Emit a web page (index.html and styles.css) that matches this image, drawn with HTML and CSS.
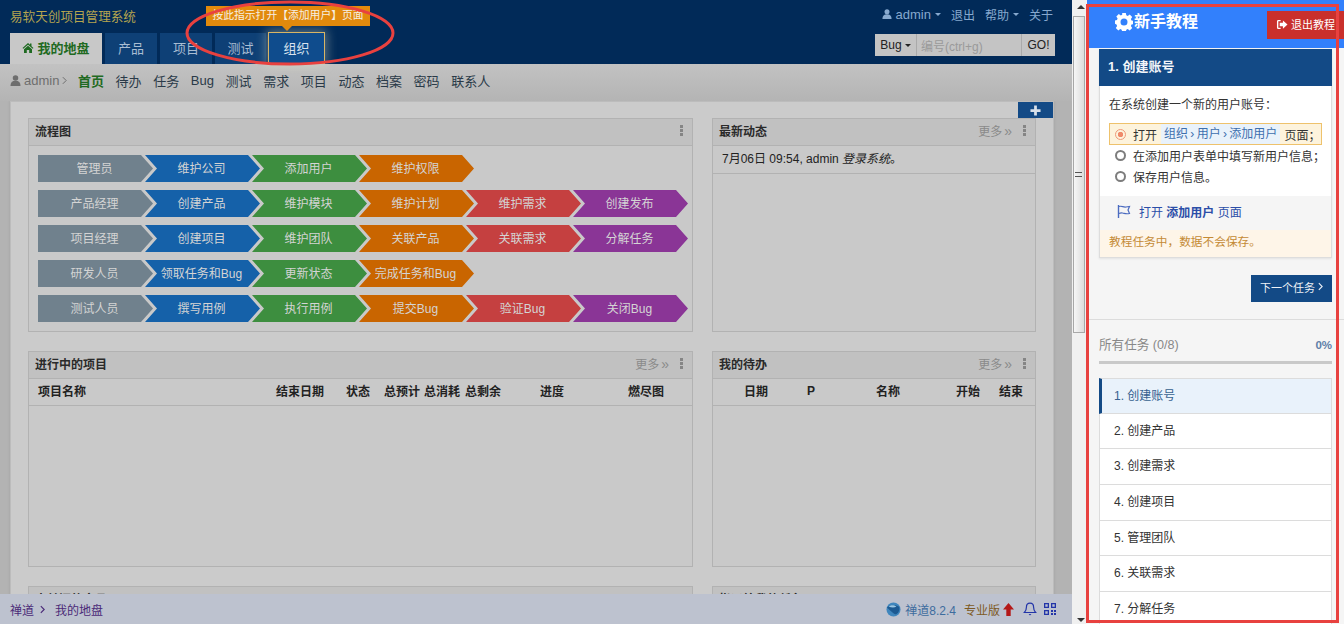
FILE: index.html
```html
<!DOCTYPE html>
<html lang="zh-CN">
<head>
<meta charset="utf-8">
<title>我的地盘 - 禅道</title>
<link rel="stylesheet" href="styles.css">
</head>
<body>
<div class="app">
  <div class="page">
    <header class="topbar">
      <div class="topbar-row">
        <span class="brand">易软天创项目管理系统</span>
        <nav class="usernav">
          <a class="usernav-item usernav-user"><svg class="ico-user" viewBox="0 0 12 12"><circle cx="6" cy="3.2" r="3"/><path d="M0.5 12c0-3.6 1.8-5.6 5.5-5.6s5.5 2 5.5 5.6z"/></svg>admin<i class="caret"></i></a>
          <a class="usernav-item">退出</a>
          <a class="usernav-item">帮助<i class="caret"></i></a>
          <a class="usernav-item">关于</a>
        </nav>
      </div>
      <div class="topbar-row topbar-lower">
        <nav class="tabs">
          <a class="tab tab-home"><svg class="ico-home" viewBox="0 0 12 12"><path d="M6 1 0.5 6l.8.8L6 2.7l4.700 4.100.8-.8L9.500 4.200V1.500H8v1.300z"/><path d="M2 7.300 6 3.800l4 3.500V11H7.200V8H4.800v3H2z"/></svg>我的地盘</a>
          <a class="tab">产品</a>
          <a class="tab">项目</a>
          <a class="tab">测试</a>
          <a class="tab tab-target">组织</a>
        </nav>
        <form class="search">
          <span class="search-type">Bug<i class="caret caret-dark"></i></span>
          <span class="search-input">编号(ctrl+g)</span>
          <span class="search-go">GO!</span>
        </form>
      </div>
      <div class="hint">按此指示打开【添加用户】页面</div>
    </header>

    <nav class="subnav">
      <span class="subnav-user"><svg class="ico-user ico-user-gray" viewBox="0 0 12 12"><circle cx="6" cy="3.2" r="3"/><path d="M0.5 12c0-3.6 1.8-5.6 5.5-5.6s5.5 2 5.5 5.6z"/></svg>admin<svg class="ico-chev" viewBox="0 0 6 10"><path d="M1 1l4 4-4 4" fill="none" stroke="currentColor" stroke-width="1.2"/></svg></span>
      <a class="subnav-item subnav-active">首页</a>
      <a class="subnav-item">待办</a>
      <a class="subnav-item">任务</a>
      <a class="subnav-item">Bug</a>
      <a class="subnav-item">测试</a>
      <a class="subnav-item">需求</a>
      <a class="subnav-item">项目</a>
      <a class="subnav-item">动态</a>
      <a class="subnav-item">档案</a>
      <a class="subnav-item">密码</a>
      <a class="subnav-item">联系人</a>
    </nav>

    <main class="main">
      <div class="dashboard">
        <div class="add-block"><svg viewBox="0 0 12 12"><path d="M4.500 0.500h3v4h4v3h-4v4h-3v-4h-4v-3h4z"/></svg></div>
        <div class="dash-grid">
          <section class="block block-flow">
            <div class="block-head"><span class="block-title">流程图</span><span class="kebab"><i></i><i></i><i></i></span></div>
            <div class="flow">
              <div class="flow-row"><span class="chev c-role">管理员</span><span class="chev c-blue">维护公司</span><span class="chev c-green">添加用户</span><span class="chev c-orange">维护权限</span></div>
              <div class="flow-row"><span class="chev c-role">产品经理</span><span class="chev c-blue">创建产品</span><span class="chev c-green">维护模块</span><span class="chev c-orange">维护计划</span><span class="chev c-red">维护需求</span><span class="chev c-purple">创建发布</span></div>
              <div class="flow-row"><span class="chev c-role">项目经理</span><span class="chev c-blue">创建项目</span><span class="chev c-green">维护团队</span><span class="chev c-orange">关联产品</span><span class="chev c-red">关联需求</span><span class="chev c-purple">分解任务</span></div>
              <div class="flow-row"><span class="chev c-role">研发人员</span><span class="chev c-blue">领取任务和Bug</span><span class="chev c-green">更新状态</span><span class="chev c-orange">完成任务和Bug</span></div>
              <div class="flow-row"><span class="chev c-role">测试人员</span><span class="chev c-blue">撰写用例</span><span class="chev c-green">执行用例</span><span class="chev c-orange">提交Bug</span><span class="chev c-red">验证Bug</span><span class="chev c-purple">关闭Bug</span></div>
            </div>
          </section>
          <section class="block block-flow">
            <div class="block-head"><span class="block-title">最新动态</span><span class="more">更多<b>»</b></span><span class="kebab"><i></i><i></i><i></i></span></div>
            <div class="feed-item">7月06日 09:54, admin <em>登录系统</em>。</div>
          </section>
          <section class="block block-list">
            <div class="block-head"><span class="block-title">进行中的项目</span><span class="more">更多<b>»</b></span><span class="kebab"><i></i><i></i><i></i></span></div>
            <div class="thead thead-projects"><span>项目名称</span><span>结束日期</span><span>状态</span><span>总预计</span><span>总消耗</span><span>总剩余</span><span>进度</span><span>燃尽图</span></div>
          </section>
          <section class="block block-list">
            <div class="block-head"><span class="block-title">我的待办</span><span class="more">更多<b>»</b></span><span class="kebab"><i></i><i></i><i></i></span></div>
            <div class="thead thead-todos"><span>日期</span><span>P</span><span>名称</span><span>开始</span><span>结束</span></div>
          </section>
          <section class="block block-list">
            <div class="block-head"><span class="block-title">未关闭的产品</span></div>
          </section>
          <section class="block block-list">
            <div class="block-head"><span class="block-title">指派给我的任务</span></div>
          </section>
        </div>
      </div>
    </main>

    <footer class="footer">
      <div class="crumbs"><a>禅道</a><svg class="ico-chev" viewBox="0 0 6 10"><path d="M1 1l4 4-4 4" fill="none" stroke="currentColor" stroke-width="1.4"/></svg><a>我的地盘</a></div>
      <div class="foot-right">
        <svg class="ico-globe" viewBox="0 0 16 16"><circle cx="8" cy="8" r="7.5" fill="#3f86bd"/><path d="M1 6c3-3 8-4 13-1 1 3 0 6-3 8-3 0-6-4-10-7z" fill="#1d5a92"/><path d="M3 5c2-2 6-2 8 0-2 1-5 1-8 0z" fill="#9cc8e4"/></svg>
        <span class="version">禅道8.2.4</span>
        <span class="edition">专业版</span>
        <svg class="ico-up" viewBox="0 0 11 13"><path d="M5.500 0 11 6.500H7.700V13H3.300V6.500H0z"/></svg>
        <svg class="ico-bell" viewBox="0 0 14 14"><path d="M7 1.200c-2.400 0-3.600 1.800-3.600 4 0 2.800-.9 4.200-2 5.300h11.200c-1.100-1.100-2-2.500-2-5.300 0-2.200-1.200-4-3.600-4z" fill="none" stroke="currentColor" stroke-width="1.2"/><path d="M5.600 12h2.800l-1.400 1.600z" fill="currentColor"/></svg>
        <svg class="ico-qr" viewBox="0 0 12 12"><path d="M0 0h5v5H0zM1.300 1.300v2.400h2.400V1.300zM7 0h5v5H7zM8.300 1.300v2.400h2.400V1.300zM0 7h5v5H0zM1.300 8.300v2.400h2.400V8.300zM7 7h2v2H7zM10 7h2v2h-2zM7 10h2v2H7zM10 10h2v2h-2z"/></svg>
      </div>
    </footer>
  </div>

  <div class="scrolltrack">
    <span class="arrow-up"></span>
    <div class="thumb"><span class="grip"></span></div>
    <span class="arrow-down"></span>
  </div>

  <aside class="tour">
    <div class="tour-head">
      <h1 class="tour-title"><svg class="ico-gear" viewBox="0 0 18 18"><path fill-rule="evenodd" d="M7.200 0h3.600l.5 2.300 1.400.6 2-1.300 2.500 2.500-1.300 2 .6 1.400 2.300.5v3l-2.300.5-.6 1.400 1.300 2-2.500 2.500-2-1.300-1.400.6-.5 2.300H7.200l-.5-2.300-1.400-.6-2 1.300-2.500-2.500 1.300-2-.6-1.400L-.300 10.500v-3l2.300-.5.600-1.400-1.300-2 2.500-2.500 2 1.300 1.400-.6zM9 5.500a3.500 3.500 0 1 0 0 7 3.500 3.500 0 0 0 0-7z"/></svg>新手教程</h1>
      <a class="tour-exit"><svg class="ico-exit" viewBox="0 0 13 12"><path d="M5 1H2.500A1.500 1.500 0 0 0 1 2.500v7A1.500 1.500 0 0 0 2.500 11H5V9.500H2.500v-7H5z"/><path d="M7.500 1.500 12.500 6l-5 4.500V8H4V4h3.500z"/></svg>退出教程</a>
    </div>
    <section class="task-card">
      <h2 class="task-card-title">1. 创建账号</h2>
      <div class="task-body">
        <p class="task-intro">在系统创建一个新的用户账号：</p>
        <ul class="steps">
          <li class="step step-active"><i class="radio"></i>打开<span class="chip">组织 <b>›</b> 用户 <b>›</b> 添加用户</span>页面；</li>
          <li class="step"><i class="radio"></i>在添加用户表单中填写新用户信息；</li>
          <li class="step"><i class="radio"></i>保存用户信息。</li>
        </ul>
      </div>
      <a class="task-open"><svg class="ico-flag" viewBox="0 0 14 13"><path d="M1.500 0v13" stroke="currentColor" stroke-width="1.4"/><path d="M2 1.500c3-1 4 1 7 .5l3.500-.5-1.500 3.500 1.500 3.500c-3.500.8-5-.2-7-.5-1.500-.2-2.500 0-3.500.5" fill="none" stroke="currentColor" stroke-width="1.2"/></svg><span>打开 <b>添加用户</b> 页面</span></a>
      <div class="task-warn">教程任务中，数据不会保存。</div>
    </section>
    <div class="next-row"><a class="next-btn">下一个任务<svg class="ico-chev" viewBox="0 0 6 10"><path d="M1 1l4 4-4 4" fill="none" stroke="currentColor" stroke-width="1.3"/></svg></a></div>
    <div class="all-tasks">
      <div class="all-head"><span class="all-title">所有任务 (0/8)</span><span class="all-pct">0%</span></div>
      <div class="all-bar"></div>
      <ol class="task-list">
        <li class="task task-current">1. 创建账号</li>
        <li class="task">2. 创建产品</li>
        <li class="task">3. 创建需求</li>
        <li class="task">4. 创建项目</li>
        <li class="task">5. 管理团队</li>
        <li class="task">6. 关联需求</li>
        <li class="task">7. 分解任务</li>
      </ol>
    </div>
  </aside>

  <svg class="mark-ellipse" viewBox="0 0 214 70"><ellipse cx="107" cy="33" rx="103" ry="31" fill="none" stroke="#e8413f" stroke-width="3"/></svg>
  <div class="mark-rect"></div>
</div>
</body>
</html>
```

FILE: styles.css
```css
* { box-sizing: border-box; }
html, body { margin: 0; padding: 0; height: 100%; overflow: hidden; }
body { font-family: "Liberation Sans", "Noto Sans CJK SC", sans-serif; font-size: 12px; color: #222; background: #f5f5f5; }
a { text-decoration: none; color: inherit; }
h1, h2, p, ul, ol { margin: 0; padding: 0; list-style: none; }

.app { position: relative; display: flex; width: 1344px; height: 624px; overflow: hidden; }
.page { width: 1072px; height: 624px; display: flex; flex-direction: column; background: #b3b3b3; flex: none; }

/* header */
.topbar { position: relative; height: 64px; background: #012a58; flex: none; padding: 0 17px 0 10px; display: flex; flex-direction: column; }
.topbar-row { display: flex; justify-content: space-between; align-items: center; height: 33px; }
.topbar-lower { height: 31px; align-items: flex-start; }
.brand { font-size: 12.6px; color: #b5a44f; margin-top: -3px; }
.usernav { display: flex; gap: 10px; color: #87a9cf; font-size: 12px; margin: -5px 2px 0 0; }
.usernav-item { display: inline-flex; align-items: center; }
.usernav-user { font-size: 13px; }
.ico-user { width: 10px; height: 10px; fill: #87a9cf; margin-right: 4px; }
.caret { display: inline-block; border: 3px solid transparent; border-top-color: currentColor; border-bottom: 0; margin-left: 4px; margin-top: 1px; }
.tabs { display: flex; height: 31px; }
.tab { width: 52px; margin-right: 3px; height: 31px; padding-bottom: 2px; background: #0e4076; color: #a9bdd3; font-size: 13px; display: flex; align-items: center; justify-content: center; }
.tab-home { width: 92px; background: #c8c8c8; color: #1f6a22; font-weight: 700; }
.ico-home { width: 12px; height: 12px; fill: #1f6a22; margin-right: 3px; }
.tab:nth-child(4) { margin-right: 2px; width: 51px; }
.tab-target { width: 57px; margin-right: 0; background: #0f4c8d; color: #d8e2ee; border: 1px solid #d8b565; box-shadow: 0 0 10px 2px rgba(230, 230, 200, .4); position: relative; z-index: 2; height: 32px; margin-top: -1px; }
.search { display: flex; height: 22px; margin-top: 1px; font-size: 12px; color: #222; background: #c4c4c4; }
.search-type { width: 42px; display: flex; align-items: center; justify-content: center; border-right: 1px solid #aaa; }
.search-input { width: 105px; display: flex; align-items: center; padding-left: 4px; color: #9a9a9a; border-right: 1px solid #aaa; }
.search-go { width: 33px; display: flex; align-items: center; justify-content: center; }
.caret-dark { margin-left: 3px; }
.hint { position: absolute; left: 206px; top: 6px; width: 164px; height: 20px; background: #e28a0c; color: #f6efe3; font-size: 10.8px; line-height: 18px; text-align: center; white-space: nowrap; z-index: 3; }
.hint::after { content: ""; position: absolute; left: 76px; top: 20px; border: 5px solid transparent; border-top-color: #e28a0c; border-bottom: 0; }

/* subnav */
.subnav { height: 37px; flex: none; display: flex; align-items: center; padding: 0 0 5px 10px; background: linear-gradient(#c2c2c2, #b4b4b4); font-size: 13px; color: #2a3a48; }
.subnav-user { display: inline-flex; align-items: center; color: #6e6e6e; width: 68px; }
.ico-user-gray { fill: #6e6e6e; width: 11px; height: 11px; margin-right: 3px; }
.ico-chev { width: 5px; height: 9px; margin-left: 3px; }
.subnav-item { margin-right: 11.6px; }
.subnav-active { color: #1f6a22; font-weight: 700; }

/* dashboard */
.main { flex: 1; min-height: 0; overflow: hidden; padding: 0 18px 0 10px; }
.dashboard { position: relative; height: 600px; background: #cbcbcb; border: 1px solid #bcbcbc; padding: 16px 18px 0 17px; box-shadow: 0 0 3px rgba(0, 0, 0, .1); }
.add-block { position: absolute; right: 0; top: 0; width: 35px; height: 16px; background: #134a86; display: flex; align-items: center; justify-content: center; }
.add-block svg { width: 11px; height: 11px; fill: #d8e0ea; }
.dash-grid { display: grid; grid-template-columns: 665px 324px; gap: 19px 19px; }
.block { background: #c9c9c9; border: 1px solid #b2b2b2; display: flex; flex-direction: column; }
.block-flow { height: 214px; }
.block-list { height: 216px; }
.block-head { height: 27px; flex: none; display: flex; align-items: center; padding: 0 8px 3px 6px; background: #c1c1c1; border-bottom: 1px solid #b2b2b2; }
.block-title { font-weight: 700; color: #2a2a2a; flex: 1; }
.more { color: #8a8a8a; margin-right: 11px; display: inline-flex; align-items: center; }
.more b { font-weight: 400; margin-left: 2px; font-size: 14px; line-height: 12px; }
.kebab { display: flex; flex-direction: column; gap: 1px; width: 3px; margin-right: 1px; }
.kebab i { width: 3px; height: 3px; background: #858585; }

.flow { padding: 9px 0 0 9px; display: flex; flex-direction: column; gap: 8px; }
.flow-row { display: flex; height: 27px; }
.chev { width: 115px; height: 27px; margin-right: -8px; padding: 0 2px 2px 0; flex: none; color: #d4d4d4; font-size: 12px; display: flex; align-items: center; justify-content: center; white-space: nowrap; clip-path: polygon(0 0, 103px 0, 115px 50%, 103px 100%, 0 100%, 12px 50%); }
.chev.c-role { clip-path: polygon(0 0, 103px 0, 115px 50%, 103px 100%, 0 100%); background: #70818d; }
.c-blue { background: #1561a9; }
.c-green { background: #3d8e3f; }
.c-orange { background: #c96500; }
.c-red { background: #c54040; }
.c-purple { background: #8a3596; }
.feed-item { height: 28px; line-height: 26px; padding-left: 9px; border-bottom: 1px solid #b2b2b2; color: #222; }
.feed-item em { font-style: italic; }

.thead { height: 27px; display: grid; align-items: center; padding-bottom: 3px; border-bottom: 1px solid #b2b2b2; font-weight: 700; color: #222; }
.thead-projects { grid-template-columns: 238px 70px 38px 40px 41px 75px 88px 1fr; padding-left: 9px; white-space: nowrap; }
.thead-todos { grid-template-columns: 63px 69px 80px 43px 1fr; padding-left: 31px; }

/* footer */
.footer { position: relative; z-index: 1; height: 30px; flex: none; display: flex; justify-content: space-between; align-items: center; padding: 0 16px 0 10px; background: #bdc2cf; margin-top: -1px; }
.crumbs { display: flex; align-items: center; color: #4b2a78; font-size: 12px; }
.crumbs .ico-chev { margin: 0 10px 0 6px; width: 5px; }
.foot-right { display: flex; align-items: center; }
.ico-globe { width: 15px; height: 15px; margin-right: 4px; }
.version { color: #3d6c9e; margin-right: 8px; }
.edition { color: #7d5a24; margin-right: 3px; }
.ico-up { width: 11px; height: 13px; fill: #b41818; margin-right: 9px; }
.ico-bell { width: 14px; height: 14px; color: #2335a8; margin-right: 7px; }
.ico-qr { width: 12px; height: 12px; fill: #2335a8; }

/* scrollbar */
.scrolltrack { position: relative; width: 14px; flex: none; background: #f0f0f0; display: flex; flex-direction: column; align-items: center; }
.thumb { margin-top: 16px; width: 12px; height: 317px; background: linear-gradient(90deg, #f6f6f6, #dcdcdc); border: 1px solid #a8a8a8; margin-left: -1px; display: flex; align-items: center; justify-content: center; }
.grip { width: 7px; height: 5px; border-top: 1px solid #555; border-bottom: 1px solid #555; position: relative; }
.arrow-up { position: absolute; top: 5px; left: 5px; border: 4px solid transparent; border-bottom-color: #333; border-top: 0; }
.arrow-down { position: absolute; bottom: 2px; left: 5px; border: 4px solid transparent; border-top-color: #333; border-bottom: 0; }

/* tour panel */
.tour { width: 258px; flex: none; background: #f5f5f5; display: flex; flex-direction: column; padding-left: 2px; }
.tour-head { height: 48px; flex: none; background: #3280fc; display: flex; justify-content: space-between; align-items: flex-start; color: #fff; margin-left: -1px; }
.tour-title { font-size: 16px; font-weight: 700; display: flex; align-items: center; margin: 11px 0 0 28px; line-height: 22px; }
.ico-gear { width: 18px; height: 18px; fill: #fff; margin-right: 1px; }
.tour-exit { width: 77px; height: 28px; margin-top: 11px; padding-bottom: 2px; background: #c9302c; font-size: 11px; display: flex; align-items: center; justify-content: center; }
.ico-exit { width: 12px; height: 11px; fill: #fff; margin-right: 3px; }
.task-card { margin: 1px 12px 0 11px; width: 233px; border: 1px solid #ddd; border-top: 0; background: #f5f5f5; box-shadow: 0 1px 2px rgba(0, 0, 0, .08); flex: none; }
.task-card-title { height: 37px; margin: 0 -1px; background: #134a86; color: #f2f5f9; font-size: 13px; font-weight: 700; line-height: 35px; padding-left: 9px; }
.task-body { height: 110px; background: #fff; padding: 11px 0 0 9px; font-size: 12px; color: #333; }
.task-intro { line-height: 17px; }
.steps { margin-top: 9px; }
.step { display: flex; align-items: center; height: 21px; padding-left: 6px; white-space: nowrap; }
.step-active { width: 213px; height: 22px; background: #fdf3dc; border: 1px solid #eec26c; padding-left: 5px; }
.radio { width: 11px; height: 11px; border: 2px solid #7d7d7d; border-radius: 50%; margin-right: 7px; flex: none; }
.step-active .radio { border: 1px solid #ef9a7a; background: radial-gradient(circle, #ef8a6a 0 2.5px, #fdf3dc 3px); }
.chip { background: #e9f2fb; color: #3d6fae; padding: 0 3px; margin: 0 4px; line-height: 20px; }
.chip b { font-weight: 400; margin: 0 -1px; }
.task-open { height: 34px; display: flex; align-items: center; padding: 0 0 3px 17px; color: #2b4ea8; font-size: 12px; white-space: pre; }
.ico-flag { width: 14px; height: 13px; color: #4b6bc0; margin-right: 8px; }
.task-warn { height: 27px; line-height: 24px; background: #fef5e8; color: #c48a35; padding-left: 9px; font-size: 11.7px; }
.next-row { display: flex; justify-content: flex-end; padding: 17px 12px 0 0; flex: none; }
.next-btn { width: 81px; height: 27px; padding-bottom: 4px; background: #134a86; color: #eef2f7; font-size: 11px; display: flex; align-items: center; justify-content: center; }
.all-tasks { margin-top: 17px; border-top: 1px solid #dcdcdc; padding: 0 12px 0 11px; flex: 1; }
.all-head { display: flex; justify-content: space-between; align-items: center; height: 41px; padding-top: 5px; }
.all-title { color: #888; font-size: 12.6px; }
.all-pct { color: #5f7fa8; font-weight: 700; font-size: 11.5px; padding-top: 3px; }
.all-bar { height: 3px; background: #c9c9c9; }
.task-list { margin-top: 14px; background: #fff; }
.task { height: 35.67px; line-height: 34.5px; padding-left: 14px; border: 1px solid #dcdcdc; border-top: 0; font-size: 12px; color: #333; }
.task-current { background: #e9f2fb; border-left: 3px solid #134a86; padding-left: 12px; color: #36618f; border-top: 1px solid #dcdcdc; }

/* annotation marks painted over the screenshot */
.mark-ellipse { position: absolute; left: 183px; top: 0; width: 214px; height: 70px; z-index: 5; pointer-events: none; }
.mark-rect { position: absolute; left: 1086px; top: 4px; width: 253px; height: 619px; border: 3px solid #e8413f; z-index: 6; pointer-events: none; }
```
